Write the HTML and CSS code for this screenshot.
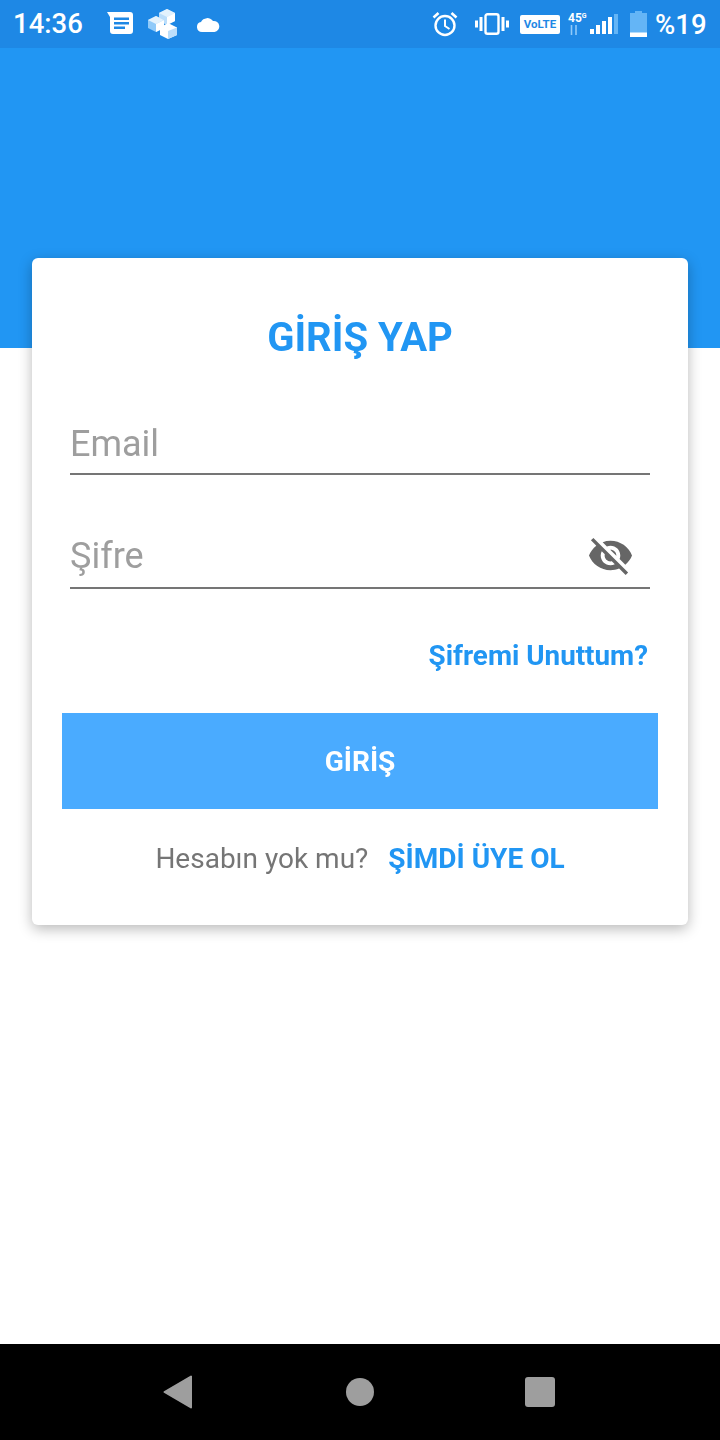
FILE: index.html
```html
<!DOCTYPE html>
<html lang="tr">
<head>
<meta charset="utf-8">
<title>Giriş Yap</title>
<link rel="stylesheet" href="styles.css">
</head>
<body>
<div class="screen">
  <header class="status">
    <div class="status-left">
      <span class="clock">14:36</span>
      <svg class="ic-msg" viewBox="0 0 26 22"><path d="M0 0H23a3 3 0 0 1 3 3V19a3 3 0 0 1-3 3H6a3 3 0 0 1-3-3V5Z" fill="#fff"/><path d="M7 5.500H22V8H7ZM7 10H22V12.500H7ZM7 14.500H18V17H7Z" fill="#1e88e5"/></svg>
      <svg class="ic-cubes" viewBox="0 0 30 30">
        <path d="M19 0 27 4V12L19 16 11 12V4Z" fill="#bbdefb"/><path d="M19 0 27 4 19 8 11 4Z" fill="#e3f2fd"/><path d="M19 8 27 4V12L19 16Z" fill="#fff"/>
        <path d="M8 7 16 11V19L8 23 0 19V11Z" fill="#90caf9"/><path d="M8 7 16 11 8 15 0 11Z" fill="#e3f2fd"/><path d="M8 15 16 11V19L8 23Z" fill="#fff"/>
        <path d="M20 14 29 18.500V26L20 30 12 26V18.500Z" fill="#fff"/><path d="M20 22 29 18.500V26L20 30Z" fill="#bbdefb"/>
      </svg>
      <svg class="ic-cloud" viewBox="0 0 24 16"><path d="M6 16a5 5 0 0 1-1-9.900A7 7 0 0 1 17 5a5.500 5.500 0 0 1 1.500 11Z" fill="#fff"/></svg>
    </div>
    <div class="status-right">
      <svg class="ic-alarm" viewBox="0 0 26 26" fill="none" stroke="#fff"><circle cx="13" cy="14.500" r="9.500" stroke-width="2.400"/><path d="M13 8.500V15l4.500 3" stroke-width="2"/><path d="M1.500 6.500 6.500 2M24.500 6.500 19.500 2" stroke-width="2.600"/></svg>
      <svg class="ic-vib" viewBox="0 0 34 22" fill="#fff"><rect x="10.500" y="1.200" width="13" height="19.600" rx="2" fill="none" stroke="#fff" stroke-width="2.400"/><rect x="4.500" y="4" width="3" height="14"/><rect x="26.500" y="4" width="3" height="14"/><rect x="0" y="7.500" width="3" height="7"/><rect x="31" y="7.500" width="3" height="7"/></svg>
      <span class="volte">VoLTE</span>
      <span class="net"><span class="net-g">45<sup class="net-s">G</sup></span><svg class="ic-arrows" viewBox="0 0 10 10"><path d="M2.500 0V10M7 0V10" stroke="#90caf9" stroke-width="1.600"/></svg></span>
      <svg class="ic-signal" viewBox="0 0 28 20"><g fill="#fff"><rect x="0" y="15" width="4" height="5"/><rect x="6" y="11" width="4" height="9"/><rect x="12" y="7" width="4" height="13"/><rect x="18" y="3" width="4" height="17"/></g><rect x="24" y="0" width="4" height="20" fill="#64b5f6"/></svg>
      <svg class="ic-batt" viewBox="0 0 17 26"><path d="M5 0H12V2H17V26H0V2H5Z" fill="#64b5f6"/><rect y="21.500" width="17" height="4.500" fill="#fff"/></svg>
      <span class="pct">%19</span>
    </div>
  </header>
  <div class="hero"></div>
  <main class="content">
    <section class="card">
      <h1 class="title">GİRİŞ YAP</h1>
      <div class="field field-email"><span class="placeholder">Email</span></div>
      <div class="field field-pass">
        <span class="placeholder">Şifre</span>
        <svg class="eye" viewBox="0 0 24 24"><path d="M12 7c2.760 0 5 2.240 5 5 0 .650-.130 1.260-.360 1.830l2.920 2.920c1.510-1.260 2.700-2.890 3.430-4.750-1.730-4.390-6-7.500-11-7.500-1.400 0-2.740.250-3.980.700l2.160 2.160C10.740 7.130 11.350 7 12 7zM2 4.270l2.280 2.280.460.460C3.080 8.300 1.780 10.020 1 12c1.730 4.390 6 7.500 11 7.500 1.550 0 3.030-.300 4.380-.840l.420.420L19.730 22 21 20.730 3.270 3 2 4.270zM7.530 9.800l1.550 1.550c-.050.210-.080.430-.080.650 0 1.660 1.340 3 3 3 .220 0 .440-.030.650-.080l1.550 1.550c-.670.330-1.410.530-2.200.530-2.760 0-5-2.240-5-5 0-.790.200-1.530.530-2.200zm4.310-.780l3.150 3.150.020-.160c0-1.660-1.340-3-3-3l-.170.010z" fill="#666"/></svg>
      </div>
      <div class="forgot-row"><a class="forgot">Şifremi Unuttum?</a></div>
      <button class="login">GİRİŞ</button>
      <p class="signup"><span class="signup-q">Hesabın yok mu?</span><a class="signup-link">ŞİMDİ ÜYE OL</a></p>
    </section>
  </main>
  <footer class="nav">
    <svg class="nav-back" viewBox="0 0 30 34"><path d="M28 1.500V32.500L1.500 17Z" fill="#9e9e9e" stroke="#9e9e9e" stroke-width="2" stroke-linejoin="round"/></svg>
    <span class="nav-home"></span>
    <span class="nav-recent"></span>
  </footer>
</div>
</body>
</html>
```
FILE: styles.css
```css
* { box-sizing: border-box; }
html, body { margin: 0; padding: 0; background: #fff; }
body { font-family: Roboto, "Noto Sans", sans-serif; }
.screen { width: 720px; height: 1440px; display: flex; flex-direction: column; overflow: hidden; }

.status { height: 48px; flex: none; background: #1e88e5; color: #fff; display: flex; justify-content: space-between; align-items: center; padding: 0 13px; }
.status-left, .status-right { display: flex; align-items: center; }
.clock { font-size: 27.500px; font-weight: 500; line-height: 48px; width: 94px; }
.ic-msg { width: 26px; height: 22px; margin-right: 15px; margin-top: -3px; }
.ic-cubes { width: 30px; height: 30px; margin-right: 18px; }
.ic-cloud { width: 24px; height: 16px; }
.ic-alarm { width: 26px; height: 26px; margin-right: 17px; }
.ic-vib { width: 34px; height: 22px; margin-right: 11px; margin-top: -1px; }
.volte { width: 40px; height: 19px; background: #fff; border-radius: 2px; color: #1e88e5; font-size: 11.500px; font-weight: 700; text-align: center; line-height: 19px; margin-right: 8px; }
.net { width: 22px; height: 26px; display: flex; flex-direction: column; }
.net-g { font-size: 12px; font-weight: 700; line-height: 14px; }
.net-s { font-size: 7px; line-height: 0; vertical-align: 4px; }
.ic-arrows { width: 10px; height: 10px; margin-left: 1px; }
.ic-signal { width: 28px; height: 20px; margin-right: 12px; margin-top: -1px; }
.ic-batt { width: 17px; height: 26px; margin-right: 9px; }
.pct { font-size: 27.500px; font-weight: 500; width: 51px; text-align: right; margin-right: 1px; margin-left: -1px; }

.hero { height: 300px; flex: none; background: #2196f3; }
.content { flex: 1; min-height: 0; padding: 0 32px; }
.card { margin-top: -90px; height: 667px; background: #fff; border-radius: 6px; box-shadow: 0 4px 14px rgba(0,0,0,.28); padding: 0 30px; display: flex; flex-direction: column; will-change: transform; }
.title { margin: 56px 0 0; height: 48px; font-size: 40px; line-height: 48px; font-weight: 700; color: #2196f3; text-align: center; }
.field { margin: 0 8px; border-bottom: 2px solid #757575; display: flex; align-items: center; justify-content: space-between; }
.field-email { margin-top: 37px; height: 76px; padding-top: 16px; }
.field-pass { margin-top: 36px; height: 78px; padding-top: 13px; padding-right: 16px; }
.placeholder { font-size: 36px; color: #9e9e9e; }
.eye { width: 47px; height: 47px; flex: none; }
.forgot-row { display: flex; justify-content: flex-end; margin: 49px 10px 0 0; }
.forgot { font-size: 27.800px; line-height: 36px; font-weight: 700; color: #2196f3; }
.login { margin-top: 39px; height: 96px; width: 100%; border: 0; background: #4aabff; color: #fff; font: 700 28px Roboto, sans-serif; flex: none; }
.signup { margin: 28px 0 0; display: flex; justify-content: center; gap: 20px; line-height: 44px; font-size: 28px; }
.signup-q { color: #757575; }
.signup-link { font-weight: 700; color: #2196f3; }

.nav { height: 96px; flex: none; background: #000; display: flex; align-items: center; justify-content: center; padding-right: 2px; }
.nav-back { width: 30px; height: 34px; margin-right: 153px; }
.nav-home { width: 28px; height: 28px; border-radius: 50%; background: #9e9e9e; margin-right: 151px; }
.nav-recent { width: 30px; height: 30px; border-radius: 3px; background: #9e9e9e; }
```
